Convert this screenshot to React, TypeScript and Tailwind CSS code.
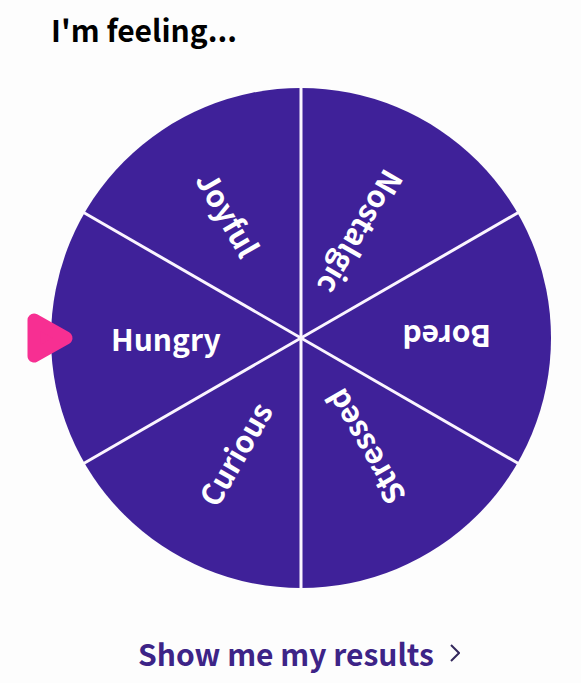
const MOODS = [
  { name: "Hungry", angle: 0 },
  { name: "Joyful", angle: 60 },
  { name: "Nostalgic", angle: 120 },
  { name: "Bored", angle: 180 },
  { name: "Stressed", angle: 240 },
  { name: "Curious", angle: 300 },
];

// The wheel is drawn around the origin; labels start near the rim and read inwards.
function MoodWheel() {
  return (
    <svg viewBox="-274 -250 524 500" className="block w-full" role="img" aria-label="Mood wheel">
      <circle r="250" fill="#3f2199" />
      <g stroke="#fbf5ff" strokeWidth="3">
        {[30, 90, 150].map((angle) => (
          <line key={angle} x1="-251" x2="251" y1="0" y2="0" transform={`rotate(${angle})`} />
        ))}
      </g>
      <g fill="#ffffff" className="text-[30px] font-bold">
        {MOODS.map((mood) => (
          <text key={mood.name} x="-190" y="13" transform={`rotate(${mood.angle})`}>
            {mood.name}
          </text>
        ))}
      </g>
      <path
        d="M-267 -18 L-235 0 L-267 18 Z"
        fill="#f72f92"
        stroke="#f72f92"
        strokeWidth="13"
        strokeLinejoin="round"
      />
    </svg>
  );
}

export default function App() {
  return (
    <main className="min-h-screen bg-[#fdfdfd] pl-[27px] pr-[30px] pt-2 font-['Noto_Sans_CJK_SC','Noto_Sans',sans-serif]">
      <h1 className="pl-6 text-[30px] font-bold leading-[42px] text-black">I'm feeling...</h1>
      <div className="mt-[38px]">
        <MoodWheel />
      </div>
      <div className="mt-11 flex justify-center pl-5">
        <a href="#results" className="flex items-center gap-4 text-[30px] font-bold leading-[42px] text-[#3d2487]">
          Show me my results
          <svg viewBox="0 0 10 18" className="h-[18px] w-[10px]" fill="none" stroke="#33285c" strokeWidth="2" aria-hidden="true">
            <path d="M1 1 L9 9 L1 17" />
          </svg>
        </a>
      </div>
    </main>
  );
}
